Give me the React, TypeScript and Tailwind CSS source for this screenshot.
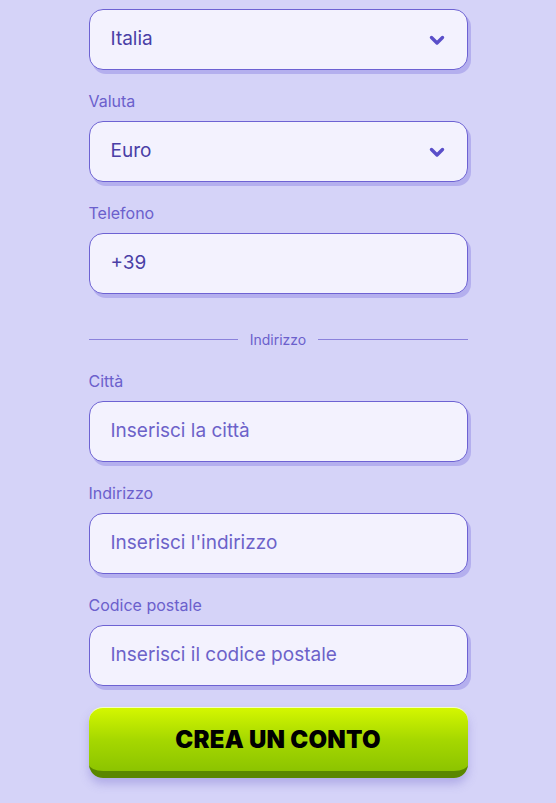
import React from "react";

const font = { fontFamily: "Inter, 'Noto Sans', sans-serif" };

const Chevron: React.FC = () => (
    <svg width="16" height="12" viewBox="0 0 16 12" className="text-[#5a4fc9]">
        <path d="M2.5 3.5 L8 9 L13.5 3.5" fill="none" stroke="currentColor" strokeWidth="3.4" strokeLinecap="round" strokeLinejoin="round"/>
    </svg>
);

const Field: React.FC<{ value?: string; placeholder?: string; select?: boolean }> = ({value, placeholder, select}) => (
    <div
        className="flex items-center justify-between h-[61px] rounded-[14px] border border-[#6d62d3] bg-[#f3f2fe] pl-[21px] pr-[22px] shadow-[3px_4px_0_0_rgba(120,110,220,0.35)]">
        {value ? (
            <span className="text-[19px] text-[#4a3fa6]">{value}</span>
        ) : (
            <span className="text-[19px] text-[#6c62c9]">{placeholder}</span>
        )}
        {select && <Chevron/>}
    </div>
);

const Label: React.FC<{ children: React.ReactNode }> = ({children}) => (
    <div className="text-[16px] leading-[20px] text-[#6b60cc] mt-[21px] mb-[10px]">{children}</div>
);

export default function App() {
    return (
        <div className="min-h-screen bg-[#d5d3f8]" style={font}>
            <div className="mx-auto w-[379px] pt-[9px] pb-[30px]">
                <Field value="Italia" select/>
                <Label>Valuta</Label>
                <Field value="Euro" select/>
                <Label>Telefono</Label>
                <Field value="+39"/>

                {/* divider */}
                <div className="flex items-center gap-[12px] mt-[35px] mb-[2px]">
                    <div className="flex-1 h-px bg-[#8b82dc]"></div>
                    <span className="text-[14px] text-[#6b60cc]">Indirizzo</span>
                    <div className="flex-1 h-px bg-[#8b82dc]"></div>
                </div>

                <Label>Città</Label>
                <Field placeholder="Inserisci la città"/>
                <Label>Indirizzo</Label>
                <Field placeholder="Inserisci l'indirizzo"/>
                <Label>Codice postale</Label>
                <Field placeholder="Inserisci il codice postale"/>

                <button
                    className="mt-[21px] w-full h-[71px] rounded-[14px] border-b-[7px] border-[#5a8700] border-t border-t-[#f4ffc0] bg-gradient-to-b from-[#d4f700] via-[#a6d800] to-[#8cc400] shadow-[0_6px_10px_rgba(110,100,200,0.35)] flex items-center justify-center">
                    <span className="text-[24px] font-black tracking-[0.01em] text-black"
                          style={{fontFamily: "Inter, 'Liberation Sans', sans-serif"}}>CREA UN CONTO</span>
                </button>
            </div>
        </div>
    );
}
